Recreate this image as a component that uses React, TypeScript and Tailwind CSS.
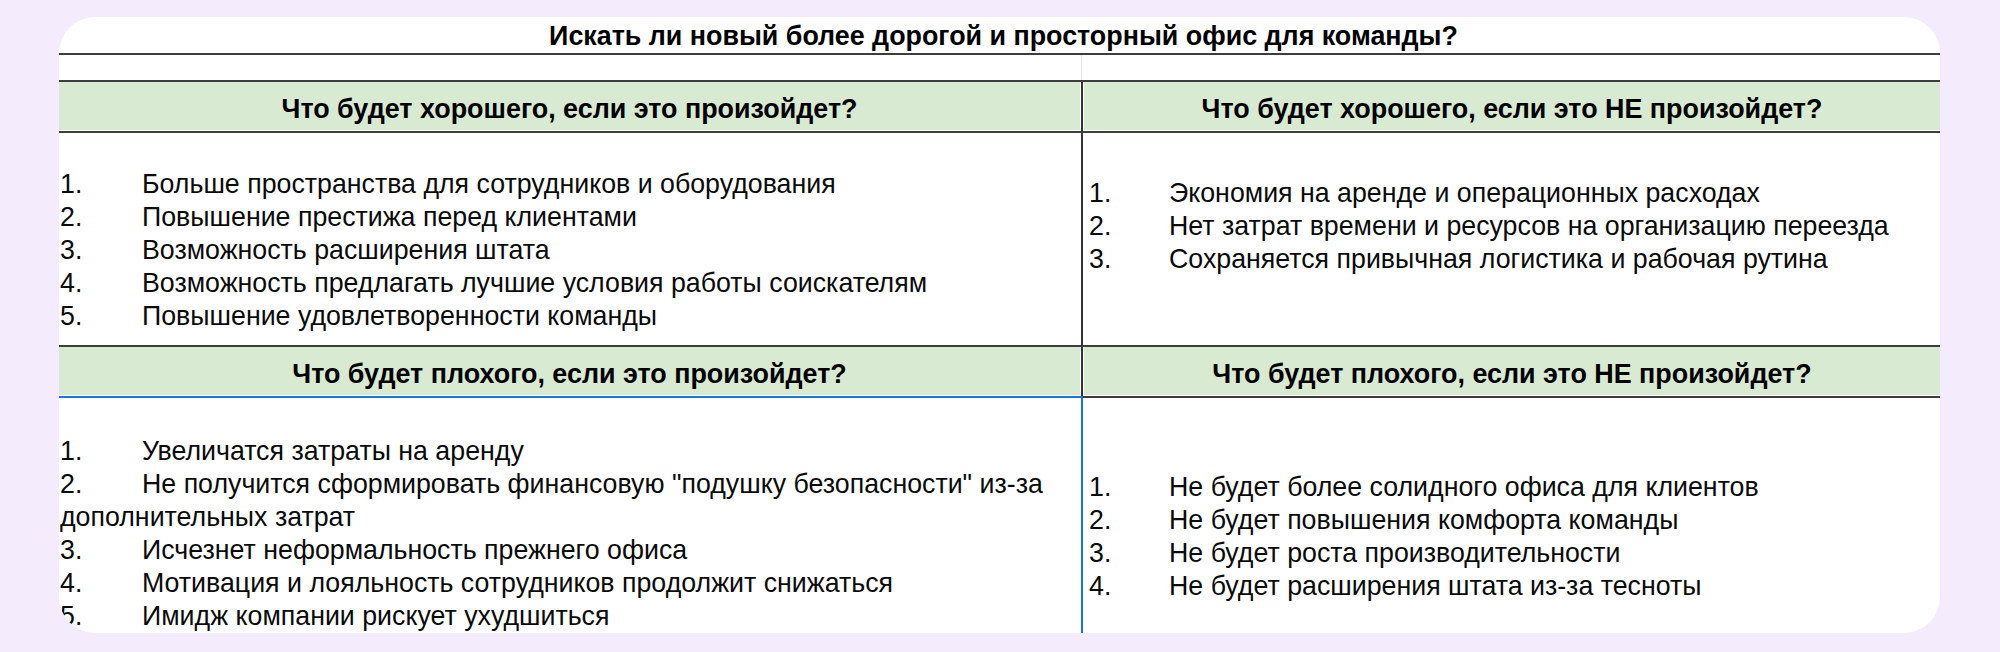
type Item = { n: string; lines: string[] };

const goodYes: Item[] = [
  { n: "1.", lines: ["Больше пространства для сотрудников и оборудования"] },
  { n: "2.", lines: ["Повышение престижа перед клиентами"] },
  { n: "3.", lines: ["Возможность расширения штата"] },
  { n: "4.", lines: ["Возможность предлагать лучшие условия работы соискателям"] },
  { n: "5.", lines: ["Повышение удовлетворенности команды"] },
];

const goodNo: Item[] = [
  { n: "1.", lines: ["Экономия на аренде и операционных расходах"] },
  { n: "2.", lines: ["Нет затрат времени и ресурсов на организацию переезда"] },
  { n: "3.", lines: ["Сохраняется привычная логистика и рабочая рутина"] },
];

const badYes: Item[] = [
  { n: "1.", lines: ["Увеличатся затраты на аренду"] },
  {
    n: "2.",
    lines: ['Не получится сформировать финансовую "подушку безопасности" из-за', "дополнительных затрат"],
  },
  { n: "3.", lines: ["Исчезнет неформальность прежнего офиса"] },
  { n: "4.", lines: ["Мотивация и лояльность сотрудников продолжит снижаться"] },
  { n: "5.", lines: ["Имидж компании рискует ухудшиться"] },
];

const badNo: Item[] = [
  { n: "1.", lines: ["Не будет более солидного офиса для клиентов"] },
  { n: "2.", lines: ["Не будет повышения комфорта команды"] },
  { n: "3.", lines: ["Не будет роста производительности"] },
  { n: "4.", lines: ["Не будет расширения штата из-за тесноты"] },
];

const List = ({ items, numWidth }: { items: Item[]; numWidth: string }) => (
  <div className="text-[26.75px] leading-[33px] text-[#0a0a0a]">
    {items.map((item) => (
      <div key={item.n} className="whitespace-nowrap">
        <span className={`inline-block ${numWidth}`}>{item.n}</span>
        {item.lines.map((line, i) => (
          <span key={i}>
            {i > 0 && <br />}
            {line}
          </span>
        ))}
      </div>
    ))}
  </div>
);

const HeaderRow = ({ left, right }: { left: string; right: string }) => (
  <div className="flex h-[49px] bg-white">
    <div className="w-[1021px] h-[48px] pt-[6px] bg-[#d9ead3] flex items-center justify-center text-[26.9px] font-bold">
      {left}
    </div>
    <div className="w-px" />
    <div className="w-[2px] bg-[#333]" />
    <div className="w-px" />
    <div className="flex-1 h-[48px] pt-[6px] bg-[#d9ead3] flex items-center justify-center text-[26.9px] font-bold">
      {right}
    </div>
  </div>
);

export default function App() {
  return (
    <div className="w-[2000px] h-[652px] bg-[#f4ebfd] pt-[17px] pl-[59px] font-['Liberation_Sans',Arial,sans-serif] text-black">
      <div className="w-[1881px] h-[616px] bg-white rounded-[36px] overflow-hidden flex flex-col">
        {/* заголовок */}
        <div className="h-[36px] pt-[2px] flex items-center justify-center text-[26.85px] font-bold pl-[8px]">
          Искать ли новый более дорогой и просторный офис для команды?
        </div>
        <div className="h-[2px] bg-[#3d3d3d]" />
        <div className="h-[25px] flex">
          <div className="w-[1022px]" />
          <div className="w-px bg-[#e3e3e3]" />
        </div>
        <div className="h-[2px] bg-[#3d3d3d]" />

        <HeaderRow left="Что будет хорошего, если это произойдет?" right="Что будет хорошего, если это НЕ произойдет?" />
        <div className="h-[2px] bg-[#3d3d3d]" />

        <div className="h-[214px] flex">
          <div className="w-[1022px] pl-px pt-[35px]">
            <List items={goodYes} numWidth="w-[82px]" />
          </div>
          <div className="w-[2px] bg-[#333]" />
          <div className="flex-1 pl-[6px] pt-[44px]">
            <List items={goodNo} numWidth="w-[80px]" />
          </div>
        </div>
        <div className="h-[2px] bg-[#3d3d3d]" />

        <HeaderRow left="Что будет плохого, если это произойдет?" right="Что будет плохого, если это НЕ произойдет?" />
        <div className="h-[2px] flex">
          <div className="w-[1024px] bg-[#1a73e8]" />
          <div className="flex-1 bg-[#3d3d3d]" />
        </div>

        <div className="flex-1 flex">
          <div className="w-[1022px] pl-px pt-[37px]">
            <List items={badYes} numWidth="w-[82px]" />
          </div>
          <div className="w-[2px] bg-[#1a73e8]" />
          <div className="flex-1 pl-[6px] pt-[73px]">
            <List items={badNo} numWidth="w-[80px]" />
          </div>
        </div>
      </div>
    </div>
  );
}
